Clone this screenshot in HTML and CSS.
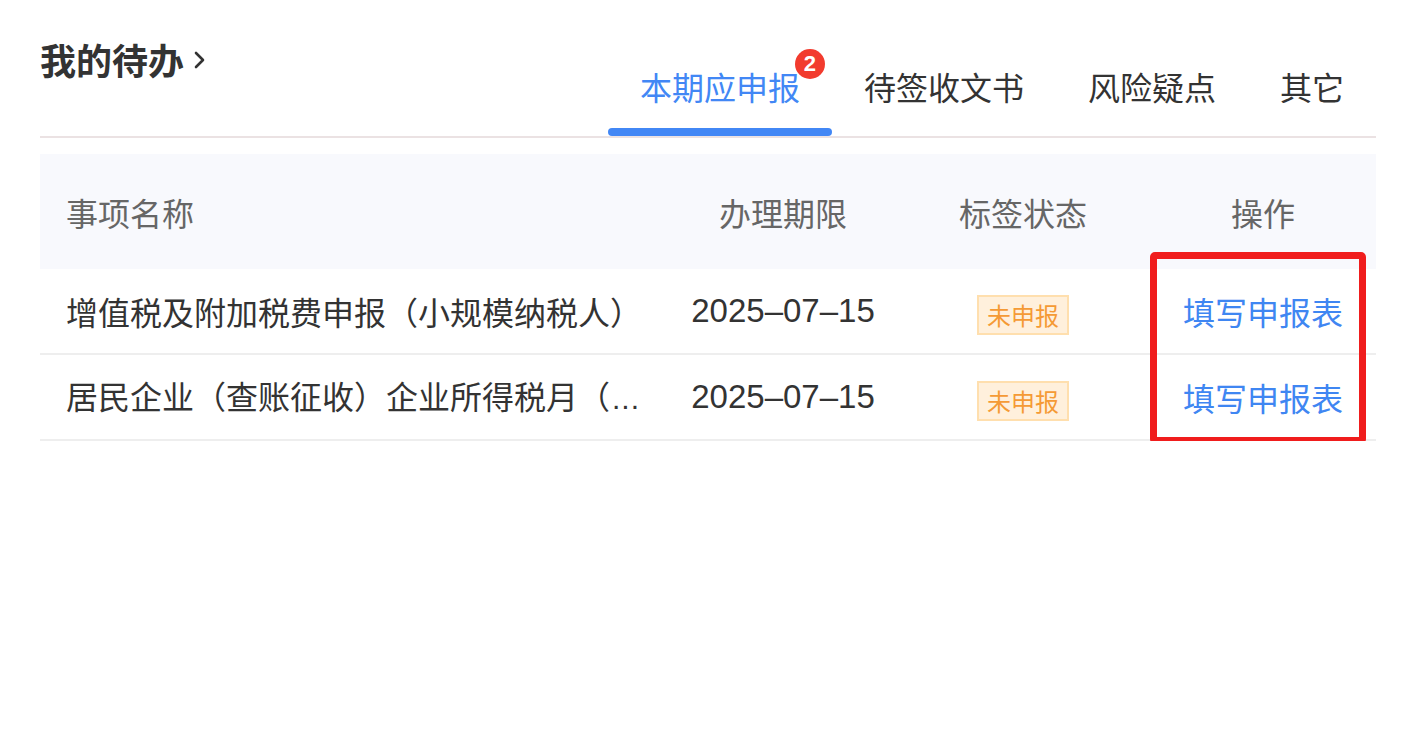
FILE: index.html
```html
<!DOCTYPE html>
<html lang="zh-CN">
<head>
<meta charset="utf-8">
<title>我的待办</title>
<link rel="stylesheet" href="styles.css">
</head>
<body>
<div class="panel">
  <div class="head">
    <div class="title">
      <span>我的待办</span>
      <svg class="chev" width="14" height="22" viewBox="0 0 14 22"><polyline points="3,4 10,11 3,18" fill="none" stroke="#333" stroke-width="2.6" stroke-linecap="round" stroke-linejoin="round"/></svg>
    </div>
    <div class="tabs">
      <div class="tab active">
        <span class="label">本期应申报<span class="badge">2</span></span>
        <span class="bar"></span>
      </div>
      <div class="tab">
        <span class="label">待签收文书</span>
        <span class="bar"></span>
      </div>
      <div class="tab">
        <span class="label">风险疑点</span>
        <span class="bar"></span>
      </div>
      <div class="tab">
        <span class="label">其它</span>
        <span class="bar"></span>
      </div>
    </div>
  </div>

  <div class="table">
    <div class="row thead">
      <div class="cell name">事项名称</div>
      <div class="cell center">办理期限</div>
      <div class="cell center">标签状态</div>
      <div class="cell center action">操作</div>
    </div>
    <div class="row tbody">
      <div class="cell name">增值税及附加税费申报（小规模纳税人）</div>
      <div class="cell center date">2025–07–15</div>
      <div class="cell center"><span class="tag">未申报</span></div>
      <div class="cell center action"><a class="link">填写申报表</a></div>
    </div>
    <div class="row tbody">
      <div class="cell name">居民企业（查账征收）企业所得税月（<span class="dots">...</span></div>
      <div class="cell center date">2025–07–15</div>
      <div class="cell center"><span class="tag">未申报</span></div>
      <div class="cell center action"><a class="link">填写申报表</a></div>
    </div>
    <div class="highlight"></div>
  </div>
</div>
</body>
</html>
```

FILE: styles.css
```css
* { box-sizing: border-box; }
html, body {
  margin: 0;
  padding: 0;
  background: #ffffff;
}
body {
  font-family: "Noto Sans CJK SC", "Noto Sans", sans-serif;
  color: #333333;
}
.panel {
  padding: 0 40px;
}
.head {
  display: flex;
  justify-content: space-between;
  height: 138px;
  border-bottom: 2px solid #ebe2e3;
}
.title {
  display: flex;
  align-items: center;
  margin-top: 41px;
  height: 36px;
  font-size: 36px;
  line-height: 36px;
  font-weight: 700;
  color: #333333;
  align-self: flex-start;
}
.chev {
  margin-left: 9px;
  margin-top: 2px;
}
.tabs {
  display: flex;
  align-self: flex-end;
}
.tab {
  display: flex;
  flex-direction: column;
  align-items: stretch;
}
.label {
  position: relative;
  padding: 0 32px;
  font-size: 32px;
  line-height: 32px;
  margin-bottom: 26px;
  color: #333333;
  white-space: nowrap;
}
.tab.active .label {
  color: #4287f5;
}
.bar {
  display: block;
  height: 8px;
  border-radius: 4px;
  background: transparent;
}
.tab.active .bar {
  background: #4287f5;
}
.badge {
  position: absolute;
  left: 187px;
  top: -21px;
  width: 30px;
  height: 30px;
  border-radius: 50%;
  background: #f23b2e;
  color: #ffffff;
  font-family: "Liberation Sans", Arial, sans-serif;
  font-weight: 700;
  font-size: 22px;
  line-height: 30px;
  text-align: center;
}
.table {
  position: relative;
  margin-top: 16px;
}
.row {
  display: grid;
  grid-template-columns: 623px 240px 240px 233px;
  align-items: center;
}
.thead {
  height: 115px;
  background: #f8f9fd;
  color: #666666;
  font-size: 32px;
}
.tbody {
  height: 86px;
  border-bottom: 2px solid #eeeeee;
  font-size: 32px;
  color: #333333;
}
.cell {
  line-height: 46px;
  white-space: nowrap;
}
.cell.name {
  padding-left: 26px;
  padding-right: 7px;
}
.dots {
  font-family: "Liberation Sans", Arial, sans-serif;
  font-size: 30px;
  letter-spacing: 1px;
  margin-left: 2px;
}
.center {
  text-align: center;
}
.action {
  padding-left: 7px;
}
.date {
  font-family: "Liberation Sans", Arial, sans-serif;
  font-size: 33px;
  color: #333333;
}
.tag {
  display: inline-block;
  width: 92px;
  height: 40px;
  line-height: 36px;
  border: 2px solid #ffdfae;
  background: #fff0dc;
  color: #f59a35;
  font-size: 24px;
  text-align: center;
  vertical-align: middle;
}
.link {
  color: #3f86f2;
  text-decoration: none;
  font-size: 32px;
}
.highlight {
  position: absolute;
  left: 1110px;
  top: 98px;
  width: 216px;
  height: 192px;
  border: 7.5px solid #f01d1d;
  border-radius: 5px;
}
```
